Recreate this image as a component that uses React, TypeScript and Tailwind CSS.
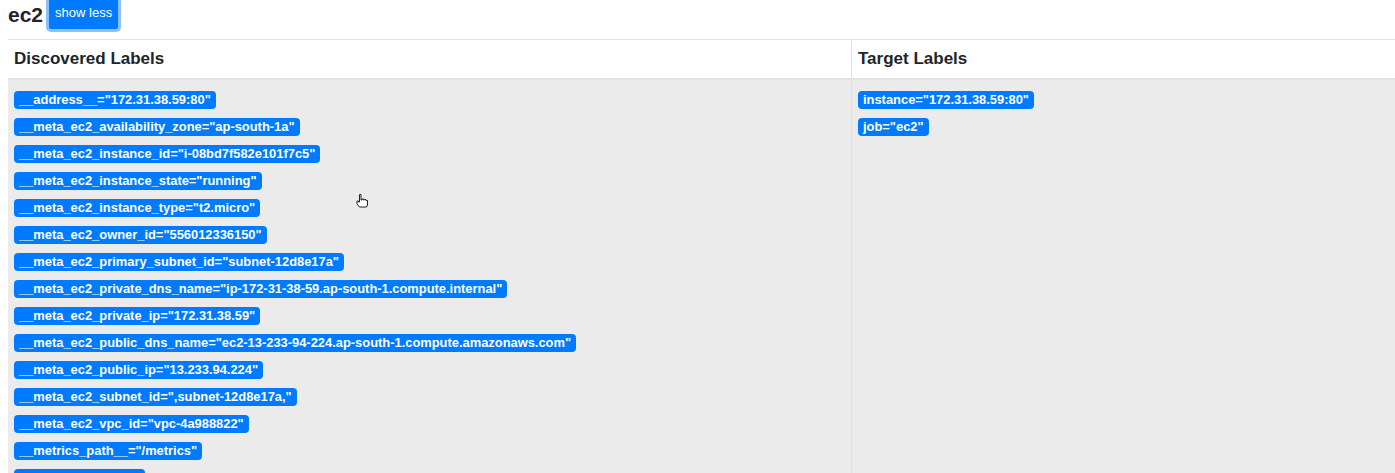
import React from "react";

const discovered = [
  '__address__="172.31.38.59:80"',
  '__meta_ec2_availability_zone="ap-south-1a"',
  '__meta_ec2_instance_id="i-08bd7f582e101f7c5"',
  '__meta_ec2_instance_state="running"',
  '__meta_ec2_instance_type="t2.micro"',
  '__meta_ec2_owner_id="556012336150"',
  '__meta_ec2_primary_subnet_id="subnet-12d8e17a"',
  '__meta_ec2_private_dns_name="ip-172-31-38-59.ap-south-1.compute.internal"',
  '__meta_ec2_private_ip="172.31.38.59"',
  '__meta_ec2_public_dns_name="ec2-13-233-94-224.ap-south-1.compute.amazonaws.com"',
  '__meta_ec2_public_ip="13.233.94.224"',
  '__meta_ec2_subnet_id=",subnet-12d8e17a,"',
  '__meta_ec2_vpc_id="vpc-4a988822"',
  '__metrics_path__="/metrics"',
  '__scheme__="http"',
];

const target = ['instance="172.31.38.59:80"', 'job="ec2"'];

function Badge({ text }: { text: string }) {
  return (
    <span className="self-start inline-block rounded-[4px] bg-[#007bff] px-[5px] pt-[3px] pb-[3px] text-[12.9px] font-bold leading-[12px] text-white whitespace-nowrap">
      {text}
    </span>
  );
}

export default function App() {
  return (
    <div
      className="relative h-[473px] overflow-hidden bg-white text-[#212529]"
      style={{ fontFamily: '"Liberation Sans", Arial, sans-serif' }}
    >
      <div className="flex items-start pl-[8px] h-[39px]">
        <h2 className="mt-[3px] text-[21px] font-bold leading-[24px] text-[#212529]">ec2</h2>
        <button className="ml-[6px] mt-[-1px] rounded-[2px] bg-[#007bff] px-[6px] pt-[6px] pb-[8px] text-[13px] leading-[16px] text-white ring-[3px] ring-[#8cc0f8]">
          show less
        </button>
      </div>
      <div className="ml-[8px] w-[1420px] border-t border-[#dee2e6]">
        <div className="flex border-b-2 border-[#e2e2e6] bg-white">
          <div className="w-[844px] border-r border-[#dee2e6] px-[6px] h-[38px] flex items-center text-[17px] font-bold">
            Discovered Labels
          </div>
          <div className="flex-1 px-[6px] h-[38px] flex items-center text-[17px] font-bold">
            Target Labels
          </div>
        </div>
        <div className="flex bg-[#ebebeb]">
          <div className="w-[844px] border-r border-[#dee2e6] pl-[6px] pt-[11px] pb-[20px] flex flex-col gap-[9px]">
            {discovered.map((t) => (
              <Badge key={t} text={t} />
            ))}
          </div>
          <div className="flex-1 pl-[6px] pt-[11px] flex flex-col gap-[9px]">
            {target.map((t) => (
              <Badge key={t} text={t} />
            ))}
          </div>
        </div>
      </div>
      <svg
        className="absolute left-[355px] top-[193px]"
        width="14"
        height="16"
        viewBox="0 0 14 16"
      >
        <path
          d="M4.5 1.5 h1.5 v5.5 h1 v-1 h1.5 v1 h1 v-0.5 h1.5 v1 h1.5 v4.5 l-1 2 h-7 l-2.5 -3 v-3 h1.5 v1 h1 z"
          fill="white"
          stroke="#222"
          strokeWidth="1"
          strokeLinejoin="round"
        />
      </svg>
    </div>
  );
}
